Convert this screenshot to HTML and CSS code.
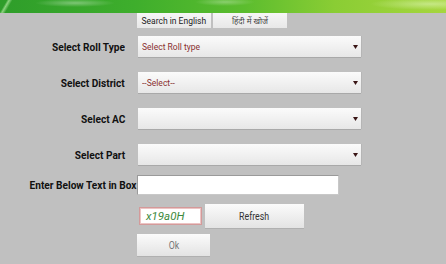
FILE: index.html
```html
<!DOCTYPE html>
<html>
<head>
<meta charset="utf-8">
<link rel="stylesheet" href="styles.css">
</head>
<body>
<div class="banner"></div>
<div class="lang-row">
  <button class="lang-btn"><span class="sq">Search in English</span></button>
  <button class="lang-btn hindi">हिंदी में खोजें</button>
</div>
<div class="form">
  <div class="row">
    <label class="lbl"><span class="sq-r">Select Roll Type</span></label>
    <div class="sel"><span class="sel-text">Select Roll type</span><svg class="arrow" width="5" height="4" viewBox="0 0 5 4"><path d="M0 0H5L2.5 4Z" fill="#3a1616"/></svg></div>
  </div>
  <div class="row">
    <label class="lbl"><span class="sq-r">Select District</span></label>
    <div class="sel"><span class="sel-text">--Select--</span><svg class="arrow" width="5" height="4" viewBox="0 0 5 4"><path d="M0 0H5L2.5 4Z" fill="#3a1616"/></svg></div>
  </div>
  <div class="row">
    <label class="lbl"><span class="sq-r">Select AC</span></label>
    <div class="sel"><span class="sel-text"></span><svg class="arrow" width="5" height="4" viewBox="0 0 5 4"><path d="M0 0H5L2.5 4Z" fill="#3a1616"/></svg></div>
  </div>
  <div class="row">
    <label class="lbl"><span class="sq-r">Select Part</span></label>
    <div class="sel"><span class="sel-text"></span><svg class="arrow" width="5" height="4" viewBox="0 0 5 4"><path d="M0 0H5L2.5 4Z" fill="#3a1616"/></svg></div>
  </div>
  <div class="row row-input">
    <label class="lbl lbl-tight"><span class="sq-r">Enter Below Text in Box</span></label>
    <input class="txt" type="text">
  </div>
  <div class="row row-captcha">
    <span></span>
    <div class="captcha-line">
      <div class="captcha">x19a0H</div>
      <button class="btn refresh"><span class="sq">Refresh</span></button>
    </div>
  </div>
  <div class="row row-ok">
    <span></span>
    <button class="btn ok"><span class="sq">Ok</span></button>
  </div>
</div>
</body>
</html>
```
FILE: styles.css
```css
html, body {
  margin: 0;
  padding: 0;
}
body {
  width: 446px;
  height: 264px;
  overflow: hidden;
  background: #c0c0c0;
  font-family: Roboto, "Noto Sans", "Liberation Sans", sans-serif;
}
.banner {
  height: 13px;
  background:
    linear-gradient(120deg, transparent 0, transparent 6px, rgba(220,255,200,0.55) 8px, transparent 11px, transparent 100%),
    radial-gradient(ellipse 40px 4px at 75px 3px, rgba(255,255,255,0.35), transparent),
    radial-gradient(ellipse 30px 4px at 225px 2px, rgba(255,255,255,0.3), transparent),
    radial-gradient(ellipse 60px 6px at 430px 4px, rgba(240,255,220,0.45), transparent),
    linear-gradient(90deg, #2e9d2a 0%, #3eae2c 30%, #5cbd2e 55%, #8acd34 75%, #a6d63e 100%);
}
.sq {
  display: inline-block;
  transform: scaleX(0.88);
  transform-origin: center;
  white-space: nowrap;
}
.sq-r {
  display: inline-block;
  transform: scaleX(0.88);
  transform-origin: right center;
  white-space: nowrap;
}
.lang-row {
  display: flex;
  padding-left: 137px;
  gap: 2px;
  height: 15px;
}
.lang-btn {
  width: 74px;
  height: 15px;
  padding: 0;
  border: none;
  background: linear-gradient(#f6f6f6, #e8e8e8);
  font-family: Roboto, "Noto Sans", sans-serif;
  font-size: 9.7px;
  color: #222;
  line-height: 15px;
  overflow: visible;
}
.lang-btn.hindi {
  font-family: "Noto Sans", "DejaVu Sans", serif;
  font-size: 8px;
  color: #444;
}
.form {
  display: grid;
  grid-template-columns: 137px 230px;
  margin-top: 8px;
}
.row {
  display: contents;
}
.lbl {
  display: flex;
  align-items: center;
  justify-content: flex-end;
  padding-right: 12px;
  font-weight: 700;
  font-size: 11.5px;
  color: #111;
  height: 21px;
  margin-bottom: 15px;
}
.sel {
  margin-left: 1px;
  width: 223px;
  height: 21px;
  box-sizing: border-box;
  display: flex;
  align-items: center;
  justify-content: space-between;
  padding: 0 3px 0 4px;
  background: linear-gradient(#fbfbfb, #e7e7e7);
  box-shadow: 0 1px 0 #a9a9a9, 1px 0 0 #b5b5b5;
  margin-bottom: 15px;
}
.sel-text {
  display: inline-block;
  font-size: 9.7px;
  color: #8a3030;
  transform: scaleX(0.88);
  transform-origin: left center;
  white-space: nowrap;
}
.arrow {
  display: block;
}
.row-input .lbl {
  height: 20px;
  margin-bottom: 9px;
  margin-top: -5px;
}
.lbl-tight {
  padding-right: 0 !important;
  white-space: nowrap;
}
.txt {
  margin: -5px 0 9px 0;
  width: 202px;
  height: 20px;
  box-sizing: border-box;
  border: 1px solid #9a9a9a;
  border-right-color: #c8c8c8;
  border-bottom-color: #c8c8c8;
  background: #fff;
  padding: 0;
}
.captcha-line {
  display: flex;
  align-items: center;
  height: 24px;
  margin-bottom: 6px;
}
.captcha {
  margin-left: 2px;
  width: 63px;
  height: 18px;
  box-sizing: border-box;
  border: 1px solid #d39a9a;
  box-shadow: inset 0 0 0 1px #ecc4c4;
  background: #fff;
  color: #3d8a3d;
  font-style: italic;
  font-size: 11.5px;
  line-height: 16px;
  padding-left: 6px;
}
.btn {
  border: none;
  padding: 0;
  background: linear-gradient(#fbfbfb, #e3e3e3);
  box-shadow: 0 1px 0 #b0b0b0;
  font-family: Roboto, "Noto Sans", sans-serif;
  font-size: 10px;
}
.refresh {
  margin-left: 3px;
  width: 99px;
  height: 24px;
  color: #333;
}
.ok {
  width: 73px;
  height: 22px;
  color: #777;
}
```
